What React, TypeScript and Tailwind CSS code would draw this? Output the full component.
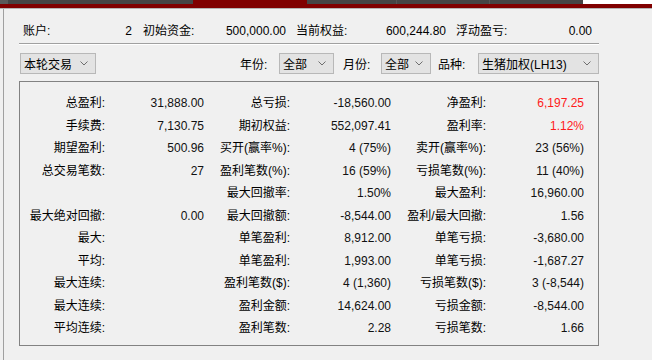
import React from "react";

type Cell = { label: string; value: string; red?: boolean };

const rows: Cell[][] = [
  [
    { label: "总盈利:", value: "31,888.00" },
    { label: "总亏损:", value: "-18,560.00" },
    { label: "净盈利:", value: "6,197.25", red: true },
  ],
  [
    { label: "手续费:", value: "7,130.75" },
    { label: "期初权益:", value: "552,097.41" },
    { label: "盈利率:", value: "1.12%", red: true },
  ],
  [
    { label: "期望盈利:", value: "500.96" },
    { label: "买开(赢率%):", value: "4 (75%)" },
    { label: "卖开(赢率%):", value: "23 (56%)" },
  ],
  [
    { label: "总交易笔数:", value: "27" },
    { label: "盈利笔数(%):", value: "16 (59%)" },
    { label: "亏损笔数(%):", value: "11 (40%)" },
  ],
  [
    { label: "", value: "" },
    { label: "最大回撤率:", value: "1.50%" },
    { label: "最大盈利:", value: "16,960.00" },
  ],
  [
    { label: "最大绝对回撤:", value: "0.00" },
    { label: "最大回撤额:", value: "-8,544.00" },
    { label: "盈利/最大回撤:", value: "1.56" },
  ],
  [
    { label: "最大:", value: "" },
    { label: "单笔盈利:", value: "8,912.00" },
    { label: "单笔亏损:", value: "-3,680.00" },
  ],
  [
    { label: "平均:", value: "" },
    { label: "单笔盈利:", value: "1,993.00" },
    { label: "单笔亏损:", value: "-1,687.27" },
  ],
  [
    { label: "最大连续:", value: "" },
    { label: "盈利笔数($):", value: "4 (1,360)" },
    { label: "亏损笔数($):", value: "3 (-8,544)" },
  ],
  [
    { label: "最大连续:", value: "" },
    { label: "盈利金额:", value: "14,624.00" },
    { label: "亏损金额:", value: "-8,544.00" },
  ],
  [
    { label: "平均连续:", value: "" },
    { label: "盈利笔数:", value: "2.28" },
    { label: "亏损笔数:", value: "1.66" },
  ],
];

const Chevron: React.FC = () => (
  <svg width="8" height="5" viewBox="0 0 8 5" className="shrink-0">
    <path d="M0.5 0.5 L4 4 L7.5 0.5" fill="none" stroke="#6e6e6e" strokeWidth="1" />
  </svg>
);

const Select: React.FC<{ text: string; width: string }> = ({ text, width }) => (
  <div
    className={`${width} h-[21px] flex items-center justify-between pl-[3px] pr-[7px] bg-[#e3e3e3] border border-[#b8b8b8] leading-[20px] pt-[3px]`}
  >
    <span>{text}</span>
    <span className="-mt-[3px]">
      <Chevron />
    </span>
  </div>
);

const Pair: React.FC<{ label: string; value: string; width: string }> = ({
  label,
  value,
  width,
}) => (
  <div className={`${width} flex justify-between`}>
    <span>{label}</span>
    <span>{value}</span>
  </div>
);

export default function App() {
  return (
    <div
      className="w-[652px] h-[360px] overflow-hidden bg-[#f0f0f0] text-[12px] text-black flex flex-col"
      style={{ fontFamily: '"Liberation Sans", "Noto Sans CJK SC", sans-serif' }}
    >
      {/* Tab strip */}
      <div className="flex h-[4px] shrink-0">
        <div className="w-[8px] bg-[#5a5a5a]" />
        <div className="w-[185px] bg-[#454545]" />
        <div className="w-[114px] bg-[#800000]" />
        <div className="w-[90px] bg-[#454545] border-r border-[#555]" />
        <div className="w-[93px] bg-[#454545] border-r border-[#555]" />
        <div className="w-[93px] bg-[#454545]" />
        <div className="flex-1 bg-white" />
      </div>
      <div className="h-[4px] bg-[#800000] shrink-0" />
      <div className="h-px bg-[#b4b4b4] shrink-0" />

      {/* Body */}
      <div className="flex-1 ml-[3px] border-l border-[#a0a0a0] pl-[15px]">
        <div className="w-[580px]">
          {/* Account line */}
          <div className="flex mt-[12px] h-[20px] leading-[20px]">
            <div className="ml-[4px]" />
            <Pair label="账户:" value="2" width="w-[109px]" />
            <div className="ml-[11px]" />
            <Pair label="初始资金:" value="500,000.00" width="w-[143px]" />
            <div className="ml-[10px]" />
            <Pair label="当前权益:" value="600,244.80" width="w-[150px]" />
            <div className="ml-[10px]" />
            <Pair label="浮动盈亏:" value="0.00" width="w-[136px]" />
          </div>

          <div className="mt-[2px] h-px bg-[#a0a0a0]" />
          <div className="h-px bg-white" />

          {/* Filters */}
          <div className="flex items-center mt-[7px] ml-[1px]">
            <Select text="本轮交易" width="w-[76px]" />
            <div className="ml-[144px] w-[39px] leading-[20px] pt-[3px]">年份:</div>
            <Select text="全部" width="w-[55px]" />
            <div className="w-[47px] pl-[9px] leading-[20px] pt-[3px]">月份:</div>
            <Select text="全部" width="w-[50px]" />
            <div className="w-[47px] pl-[7px] leading-[20px] pt-[3px]">品种:</div>
            <Select text="生猪加权(LH13)" width="w-[121px]" />
          </div>

          {/* Statistics group */}
          <div className="mt-[6px] border border-[#828282] h-[265px] pt-[10px]">
            <div className="grid grid-cols-[85px_99px_86px_101px_95px_98px] auto-rows-[22.5px]">
              {rows.map((row, i) =>
                row.map((c, j) => (
                  <React.Fragment key={`${i}-${j}`}>
                    <div className="text-right leading-[22px]">{c.label}</div>
                    <div
                      className={`text-right leading-[22px] ${
                        c.red ? "text-[#ff1a1a]" : "text-[#111]"
                      }`}
                    >
                      {c.value}
                    </div>
                  </React.Fragment>
                ))
              )}
            </div>
          </div>
        </div>
      </div>
    </div>
  );
}
